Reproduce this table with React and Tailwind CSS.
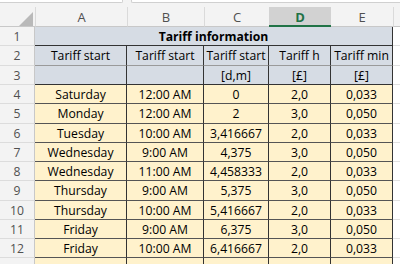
import React from "react";

const cols = "grid grid-cols-[35px_92px_77px_65px_62px_62px_1fr]";
const data = [
  ["Saturday", "12:00 AM", "0", "2,0", "0,033"],
  ["Monday", "12:00 AM", "2", "3,0", "0,050"],
  ["Tuesday", "10:00 AM", "3,416667", "2,0", "0,033"],
  ["Wednesday", "9:00 AM", "4,375", "3,0", "0,050"],
  ["Wednesday", "11:00 AM", "4,458333", "2,0", "0,033"],
  ["Thursday", "9:00 AM", "5,375", "3,0", "0,050"],
  ["Thursday", "10:00 AM", "5,416667", "2,0", "0,033"],
  ["Friday", "9:00 AM", "6,375", "3,0", "0,050"],
  ["Friday", "10:00 AM", "6,416667", "2,0", "0,033"],
];
const dataH = ["h-[19px]", "h-[20px]", "h-[19px]", "h-[19px]", "h-[19px]", "h-[20px]", "h-[19px]", "h-[19px]", "h-[19px]"];

function RowHead({ n }) {
  return (
    <div className="flex items-center justify-center pt-[2px] bg-[#f3f3f3] border-b border-r border-b-[#dcdcdc] border-r-[#c8c8c8] text-[#505050]">
      {n}
    </div>
  );
}

function Filler() {
  return <div className="border-b border-[#e1e1e1] bg-white" />;
}

export default function App() {
  return (
    <div className="w-[400px] h-[264px] overflow-hidden bg-white text-[12.2px] leading-none text-black font-['Open_Sans',sans-serif]">
      {/* top strip */}
      <div className="h-[7px] bg-[#f3f3f3] flex">
        <div className="w-[123px] h-[3px] bg-white border-b border-r border-[#d0d0d0] rounded-br-[2px]" />
        <div className="ml-[8px] flex-1 h-[3px] bg-white border-b border-l border-[#d0d0d0] rounded-bl-[2px]" />
      </div>
      {/* column headers */}
      <div className={`${cols} h-[20px] text-[#505050] text-[13px]`}>
        <div className="relative bg-[#f3f3f3] border-b border-[#c8c8c8]">
          <svg className="absolute left-[19px] top-[5px]" width="14" height="14" viewBox="0 0 14 14">
            <polygon points="14,0 14,14 0,14" fill="#b9b9b9" />
          </svg>
        </div>
        {["A", "B", "C"].map((c) => (
          <div key={c} className="flex items-center justify-center pt-[2px] bg-[#f3f3f3] border-b border-[#c8c8c8] border-l border-l-[#dadada]">
            {c}
          </div>
        ))}
        <div className="flex items-center justify-center pt-[2px] bg-[#d2d2d2] border-b-2 border-[#217346] text-[#217346] font-bold">
          D
        </div>
        <div className="flex items-center justify-center pt-[2px] bg-[#f3f3f3] border-b border-[#c8c8c8]">E</div>
        <div className="bg-[#f3f3f3] border-b border-[#c8c8c8] border-l border-l-[#dadada]" />
      </div>
      {/* row 1 */}
      <div className={`${cols} h-[19px]`}>
        <RowHead n={1} />
        <div className="col-span-5 flex items-center justify-center pt-[2px] bg-[#d6dce4] border-b border-r border-[#333] font-bold">
          Tariff information
        </div>
        <Filler />
      </div>
      {/* row 2 */}
      <div className={`${cols} h-[20px]`}>
        <RowHead n={2} />
        {["Tariff start", "Tariff start", "Tariff start", "Tariff h", "Tariff min"].map((t, i) => (
          <div key={i} className="flex items-center justify-center pt-[2px] bg-[#d6dce4] border-b border-b-[#9a9a9a] border-r border-r-[#333] whitespace-nowrap">
            {t}
          </div>
        ))}
        <Filler />
      </div>
      {/* row 3 */}
      <div className={`${cols} h-[19px]`}>
        <RowHead n={3} />
        {["", "", "[d,m]", "[£]", "[£]"].map((t, i) => (
          <div key={i} className="flex items-center justify-center pt-[2px] bg-[#d6dce4] border-b border-b-[#333] border-r border-r-[#333]">
            {t}
          </div>
        ))}
        <Filler />
      </div>
      {data.map((r, ri) => (
        <div key={ri} className={`${cols} ${dataH[ri]}`}>
          <RowHead n={ri + 4} />
          {r.map((t, i) => (
            <div key={i} className="flex items-center justify-center pt-[2px] bg-[#fff2cc] border-b border-b-[#555] border-r border-r-[#333] whitespace-nowrap">
              {t}
            </div>
          ))}
          <Filler />
        </div>
      ))}
      {/* row 13 partial */}
      <div className={`${cols} h-[19px]`}>
        <div className="bg-[#f3f3f3] border-r border-[#c8c8c8]" />
        {[0, 1, 2, 3, 4].map((i) => (
          <div key={i} className="bg-[#fff2cc] border-r border-[#333]" />
        ))}
        <Filler />
      </div>
    </div>
  );
}
